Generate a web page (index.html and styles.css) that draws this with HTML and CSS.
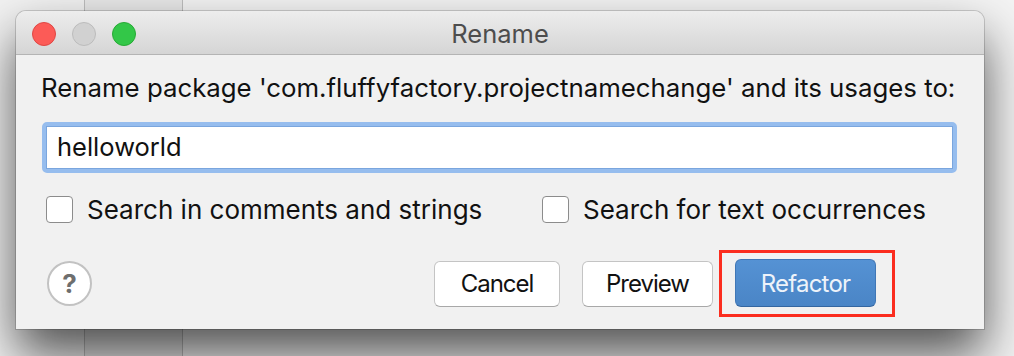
FILE: index.html
```html
<!DOCTYPE html>
<html lang="en">

<head>
    <meta charset="UTF-8">
    <meta name="viewport" content="width=device-width, initial-scale=1.0">
    <title>Rename</title>
    <link rel="stylesheet" href="styles.css">
</head>

<body>

    <!-- IDE behind the dialog -->
    <div class="ide">
        <div class="ide-left"></div>
        <div class="ide-column"></div>
        <div class="ide-rest"></div>
    </div>

    <div class="dialog">
        <div class="titlebar">
            <div class="lights">
                <span class="light red"></span>
                <span class="light gray"></span>
                <span class="light green"></span>
            </div>
            <div class="title">Rename</div>
        </div>

        <div class="dialog-body">
            <div class="prompt">Rename package 'com.fluffyfactory.projectnamechange' and its usages to:</div>

            <div class="field">
                <input type="text" value="helloworld" class="name-input">
            </div>

            <div class="options">
                <label class="check first">
                    <span class="box"></span>
                    <span>Search in comments and strings</span>
                </label>
                <label class="check">
                    <span class="box"></span>
                    <span>Search for text occurrences</span>
                </label>
            </div>

            <div class="actions">
                <button class="help">?</button>
                <div class="buttons">
                    <button class="btn">Cancel</button>
                    <button class="btn preview">Preview</button>
                    <div class="highlight">
                        <button class="btn primary">Refactor</button>
                    </div>
                </div>
            </div>
        </div>
    </div>

</body>

</html>
```

FILE: styles.css
```css
body {
    margin: 0;
    padding: 0;
    width: 1014px;
    height: 356px;
    overflow: hidden;
    position: relative;
    font-family: 'Inter', 'Liberation Sans', sans-serif;
    background-color: #f2f2f2;
}

.ide {
    display: flex;
    height: 100%;
}

.ide-left {
    width: 84px;
    background-color: #f1f1f1;
}

.ide-column {
    width: 97px;
    background-color: #e7e7e7;
    border-left: 1px solid #bdbdbd;
    border-right: 1px solid #bdbdbd;
}

.ide-rest {
    flex: 1;
    background-color: #f3f3f3;
}

.dialog {
    position: absolute;
    left: 16px;
    top: 11px;
    width: 968px;
    height: 318px;
    display: flex;
    flex-direction: column;
    background-color: #f1f1f1;
    border-radius: 10px 10px 0 0;
    box-shadow: 0 0 0 1px rgba(0, 0, 0, 0.16), 0 26px 50px rgba(0, 0, 0, 0.66);
}

.titlebar {
    flex-shrink: 0;
    height: 44px;
    box-sizing: border-box;
    padding-top: 2px;
    display: flex;
    align-items: center;
    position: relative;
    border-radius: 10px 10px 0 0;
    background: linear-gradient(#ededed, #d5d5d5);
    border-bottom: 1px solid #b4b4b4;
}

.lights {
    display: flex;
    gap: 16px;
    padding-left: 16px;
}

.light {
    width: 22px;
    height: 22px;
    border-radius: 50%;
    border: 1px solid;
}

.red {
    background-color: #fc5b57;
    border-color: #df4744;
}

.gray {
    background-color: #d1d1d1;
    border-color: #bcbcbc;
}

.green {
    background-color: #33c748;
    border-color: #27aa35;
}

.title {
    position: absolute;
    left: 0;
    right: 0;
    text-align: center;
    font-size: 25.5px;
    color: #4d4d4d;
}

.dialog-body {
    flex: 1;
    padding: 0 27px 0 26px;
    display: flex;
    flex-direction: column;
}

.prompt {
    margin-top: 18px;
    margin-left: -1px;
    font-size: 25.8px;
    line-height: 30px;
    white-space: nowrap;
    color: #111;
}

.field {
    flex-shrink: 0;
    margin-top: 19px;
    height: 51px;
    box-sizing: border-box;
    border: 4px solid #96bdee;
    border-radius: 5px;
    background-color: #fff;
    display: flex;
}

.name-input {
    flex: 1;
    border: 1px solid #7aa6de;
    outline: none;
    font-family: inherit;
    font-size: 25.5px;
    color: #111;
    padding: 0 11px 2px 10px;
    margin: 0;
}

.options {
    display: flex;
    margin-top: 21px;
    padding-left: 4px;
}

.check {
    display: flex;
    align-items: center;
    gap: 14px;
    font-size: 26px;
    line-height: 31px;
    white-space: nowrap;
    color: #111;
}

.check.first {
    width: 496px;
}

.box {
    width: 25px;
    height: 25px;
    border: 1px solid #8c8c8c;
    border-radius: 4px;
    background-color: #fff;
}

.actions {
    display: flex;
    align-items: center;
    margin-top: 25px;
}

.help {
    width: 45px;
    height: 45px;
    margin-left: 5px;
    border-radius: 50%;
    border: 2px solid #c2c2c2;
    background-color: #fff;
    color: #6e6e6e;
    font-family: inherit;
    font-size: 26px;
    font-weight: bold;
    padding: 0;
    cursor: pointer;
}

.buttons {
    display: flex;
    align-items: center;
    margin-left: auto;
    margin-right: 62px;
}

.btn {
    height: 46px;
    border-radius: 6px;
    border: 1px solid #c4c4c4;
    border-bottom-color: #a8a8a8;
    background-color: #fff;
    font-family: inherit;
    font-size: 24px;
    letter-spacing: -1px;
    color: #111;
    padding: 0;
    width: 126px;
    cursor: pointer;
}

.btn.preview {
    width: 131px;
    margin-left: 22px;
}

.highlight {
    margin-left: 6px;
    border: 3px solid #fb2d1f;
    padding: 6px 16px 7px 13px;
}

.btn.primary {
    width: 141px;
    height: 48px;
    color: #eef3fa;
    letter-spacing: -0.8px;
    background: linear-gradient(#5592d4, #4a85c6);
    border-color: #4077b6;
    border-bottom-color: #3466a0;
}
```
